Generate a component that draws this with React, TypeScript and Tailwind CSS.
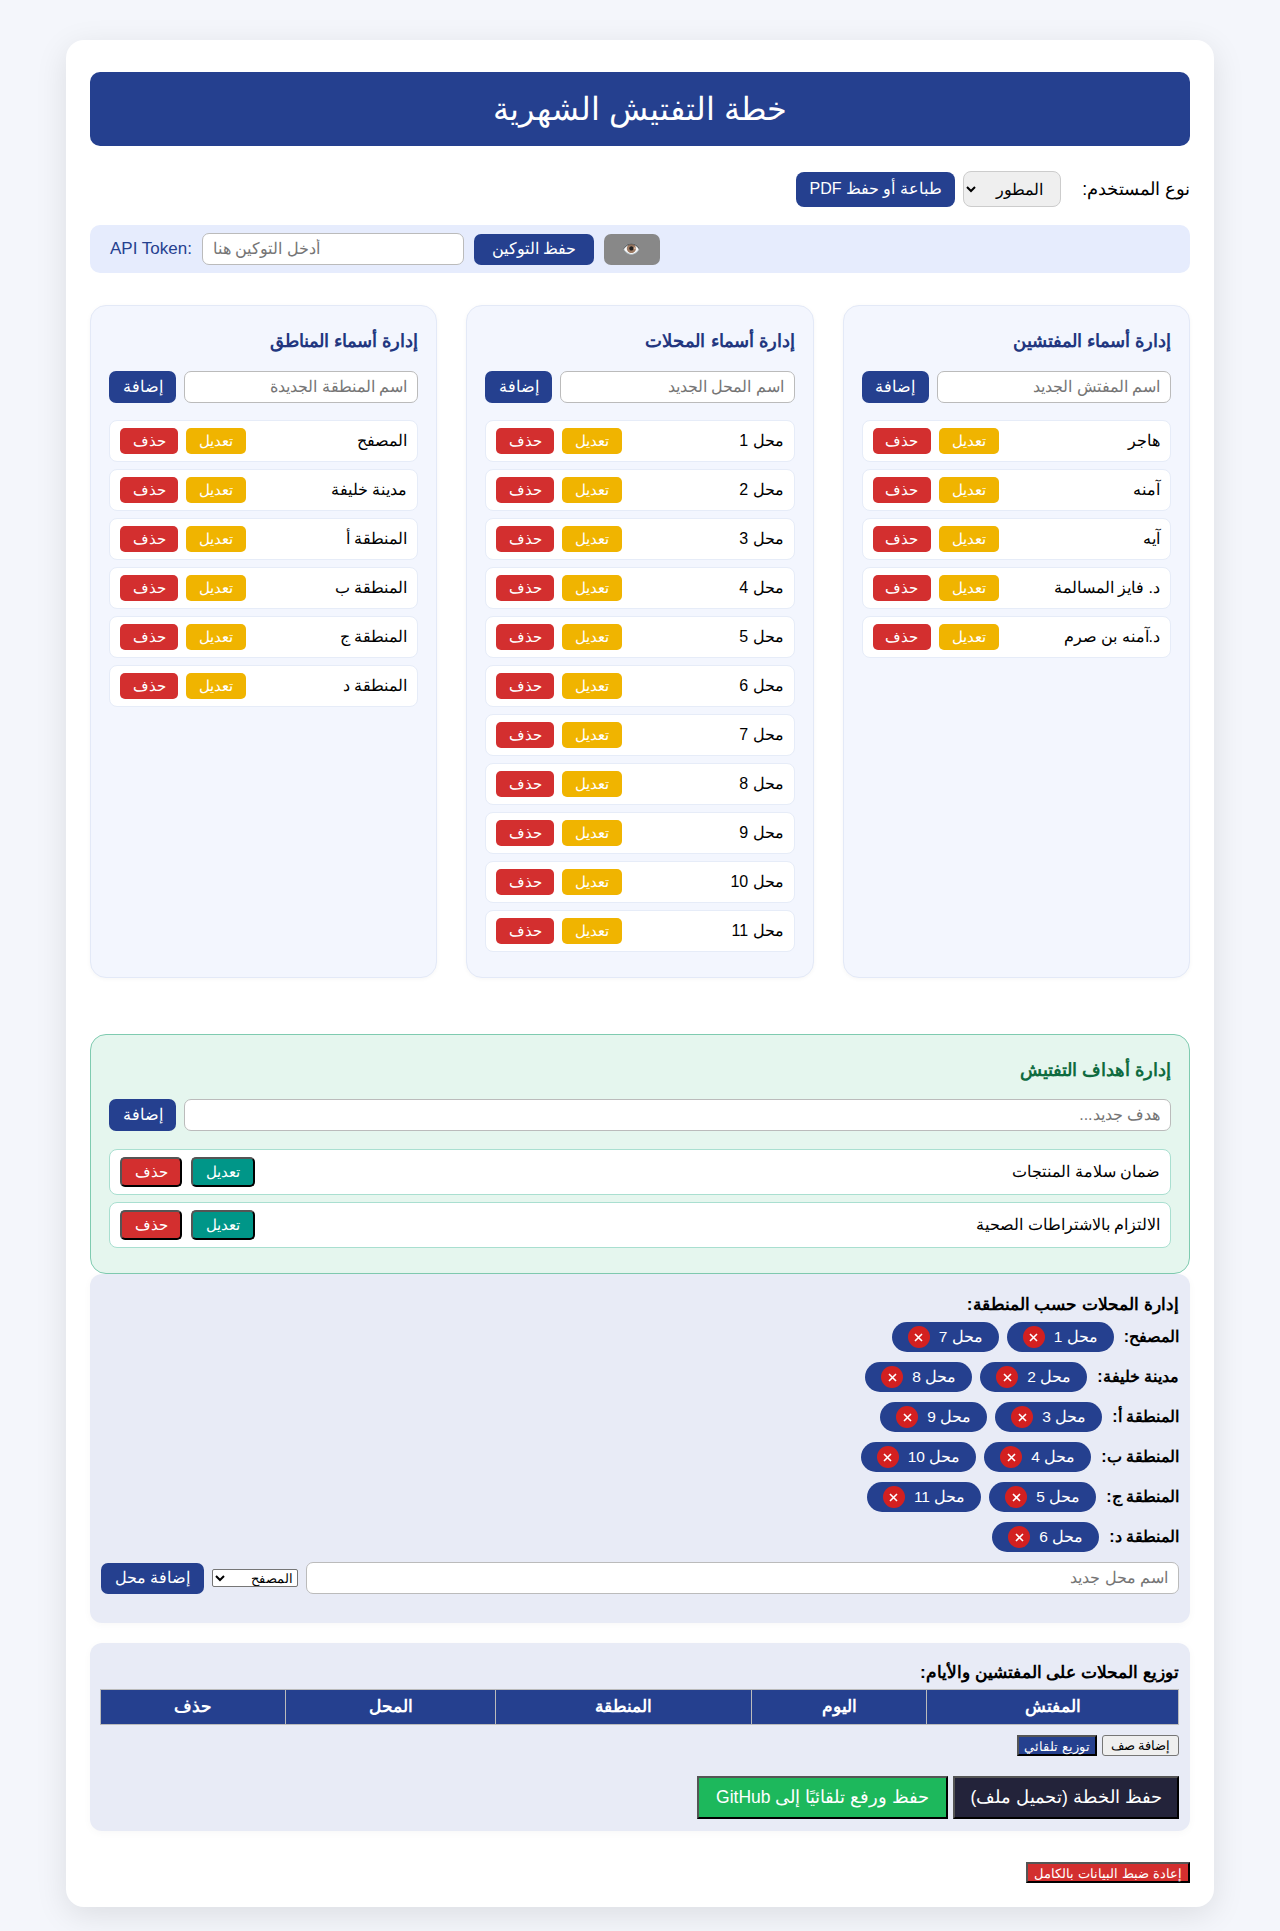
const fontFamily = '"Liberation Sans", Arial, sans-serif';

const inputCls = "min-w-0 rounded-[7px] border border-[#bbbbbb] bg-white px-[10px] text-[16px] text-black placeholder:text-[#757575] outline-none";
const blueBtn = "rounded-[7px] bg-[#25408f] text-[16px] text-white";

function ListCard({ title, placeholder, items }: { title: string; placeholder: string; items: string[] }) {
  return (
    <div className="rounded-[16px] border border-[#e3e9f7] bg-[#f3f6fe] px-[18px] pt-[18px] shadow-[0_1px_4px_rgba(0,0,0,0.04)]">
      <h3 className="mb-[14px] h-[33px] text-[18.4px] leading-[33px] font-bold text-[#22367f]">{title}</h3>
      <div className="mb-[17px] flex h-[32px] gap-[8px]">
        <input className={inputCls + " flex-1"} placeholder={placeholder} />
        <button className={blueBtn + " w-[67px]"}>إضافة</button>
      </div>
      <div className="flex flex-col gap-[7px] pb-[25px]">
        {items.map((t) => (
          <div key={t} className="flex h-[42px] items-center justify-between rounded-[8px] border border-[#e6ecf8] bg-white px-[10px] text-[16px] text-black">
            <span>{t}</span>
            <div className="flex gap-[8px]">
              <button className="h-[26px] w-[60px] rounded-[5px] bg-[#f0b400] text-[15px] text-white">تعديل</button>
              <button className="h-[26px] w-[58px] rounded-[5px] bg-[#d32f2f] text-[15px] text-white">حذف</button>
            </div>
          </div>
        ))}
      </div>
    </div>
  );
}

function Goal({ text }: { text: string }) {
  return (
    <div className="flex h-[46px] items-center justify-between rounded-[8px] border border-[#a9dfd0] bg-white px-[10px] text-[16px] text-black">
      <span>{text}</span>
      <div className="flex gap-[9px]">
        <button className="h-[30px] w-[64px] rounded-[5px] border-2 border-t-[#555] border-l-[#555] border-r-black border-b-black bg-[#009688] text-[15px] text-white">تعديل</button>
        <button className="h-[30px] w-[62px] rounded-[5px] border-2 border-t-[#555] border-l-[#555] border-r-black border-b-black bg-[#d32f2f] text-[15px] text-white">حذف</button>
      </div>
    </div>
  );
}

function Chip({ label }: { label: string }) {
  return (
    <span className="flex h-[30px] items-center gap-[9px] rounded-[16px] bg-[#25408f] px-[16px] text-[15.5px] text-white">
      <span>{label}</span>
      <span className="flex h-[22px] w-[22px] items-center justify-center rounded-full bg-[#d32020]">
        <svg width="9" height="9" viewBox="0 0 9 9" stroke="white" strokeWidth="1.6" aria-hidden="true">
          <path d="M1 1 8 8M8 1 1 8" />
        </svg>
      </span>
    </span>
  );
}

const regions: [string, string[]][] = [
  ["المصفح:", ["محل 1", "محل 7"]],
  ["مدينة خليفة:", ["محل 2", "محل 8"]],
  ["المنطقة أ:", ["محل 3", "محل 9"]],
  ["المنطقة ب:", ["محل 4", "محل 10"]],
  ["المنطقة ج:", ["محل 5", "محل 11"]],
  ["المنطقة د:", ["محل 6"]],
];

const columns: [string, number][] = [
  ["المفتش", 252],
  ["اليوم", 175],
  ["المنطقة", 256],
  ["المحل", 210],
  ["حذف", 185],
];

const bevel = "border-2 border-t-[#555] border-l-[#555] border-r-black border-b-black";

export default function App() {
  return (
    <div dir="rtl" style={{ fontFamily }} className="min-h-[1931px] bg-[#f4f6fb] pt-[40px]">
      <div className="mx-auto h-[1867px] w-[1148px] rounded-[18px] bg-white px-[24px] pt-[32px] shadow-[0_8px_32px_rgba(0,0,0,0.1)]">
        <header className="flex h-[74px] items-center justify-center rounded-[10px] bg-[#25408f]">
          <h1 className="text-[32px] font-normal text-white">خطة التفتيش الشهرية</h1>
        </header>

        <div className="mt-[25px] flex h-[36px] items-center">
          <label className="ml-[21px] text-[17.6px] text-black">نوع المستخدم:</label>
          <select className="h-[36px] w-[98px] rounded-[8px] border border-[#cccccc] bg-[#efefef] pr-[13px] pl-[7px] text-[16px] text-black">
            <option>المطور</option>
          </select>
          <button className="mr-[8px] h-[35px] w-[159px] rounded-[8px] bg-[#25408f] text-[16px] text-white">طباعة أو حفظ PDF</button>
        </div>

        <div dir="ltr" className="mt-[18px] flex h-[48px] items-center rounded-[10px] bg-[#e6ecfd] pl-[20px]">
          <label className="mr-[10px] text-[17px] text-[#25408f]">API Token:</label>
          <input className={inputCls + " h-[32px] w-[262px]"} placeholder="أدخل التوكين هنا" />
          <button className={blueBtn + " ml-[10px] h-[31px] w-[120px]"}>حفظ التوكين</button>
          <button className="ml-[10px] h-[31px] w-[56px] rounded-[7px] bg-[#888888] text-[15px] text-white">👁️</button>
        </div>

        <div className="mt-[32px] grid grid-cols-3 gap-[29px]">
          <ListCard title="إدارة أسماء المفتشين" placeholder="اسم المفتش الجديد" items={["هاجر", "آمنه", "آيه", "د. فايز المسالمة", "د.آمنه بن صرم"]} />
          <ListCard title="إدارة أسماء المحلات" placeholder="اسم المحل الجديد" items={["محل 1", "محل 2", "محل 3", "محل 4", "محل 5", "محل 6", "محل 7", "محل 8", "محل 9", "محل 10", "محل 11"]} />
          <ListCard title="إدارة أسماء المناطق" placeholder="اسم المنطقة الجديدة" items={["المصفح", "مدينة خليفة", "المنطقة أ", "المنطقة ب", "المنطقة ج", "المنطقة د"]} />
        </div>

        <section className="mt-[56px] h-[240px] rounded-[16px] border border-[#7fcbb0] bg-[#e5f6ee] px-[18px] pt-[18px]">
          <h3 className="mb-[13px] h-[33px] text-[18.4px] leading-[33px] font-bold text-[#0f6b3f]">إدارة أهداف التفتيش</h3>
          <div className="mb-[18px] flex h-[32px] gap-[8px]">
            <input className={inputCls + " flex-1"} placeholder="هدف جديد..." />
            <button className={blueBtn + " w-[67px]"}>إضافة</button>
          </div>
          <div className="flex flex-col gap-[7px]">
            <Goal text="ضمان سلامة المنتجات" />
            <Goal text="الالتزام بالاشتراطات الصحية" />
          </div>
        </section>

        <section className="h-[349px] rounded-[12px] bg-[#e8ebf6] px-[11px] pt-[19px] shadow-[0_2px_8px_rgba(0,0,0,0.03)]">
          <h4 className="mb-[7px] text-[17.3px] leading-[22px] font-bold text-black">إدارة المحلات حسب المنطقة:</h4>
          <div className="flex flex-col gap-[10px]">
            {regions.map(([name, shops]) => (
              <div key={name} className="flex h-[30px] items-center gap-[8px]">
                <b className="ml-[2px] text-[16px] text-black">{name}</b>
                {shops.map((s) => (
                  <Chip key={s} label={s} />
                ))}
              </div>
            ))}
          </div>
          <div className="mt-[10px] flex h-[32px] items-center gap-[8px]">
            <input className={inputCls + " h-[32px] flex-1"} placeholder="اسم محل جديد" />
            <select className="h-[18px] w-[86px] rounded-[2px] border border-[#767676] bg-white text-[13.33px] text-black">
              <option>المصفح</option>
            </select>
            <button className={blueBtn + " h-[31px] w-[103px]"}>إضافة محل</button>
          </div>
        </section>

        <section className="mt-[20px] h-[188px] rounded-[12px] bg-[#e8ebf6] px-[11px] pt-[18px] shadow-[0_2px_8px_rgba(0,0,0,0.03)]">
          <h4 className="mb-[6px] text-[17.3px] leading-[22px] font-bold text-black">توزيع المحلات على المفتشين والأيام:</h4>
          <table className="w-full table-fixed border-collapse">
            <thead>
              <tr>
                {columns.map(([name, w]) => (
                  <th key={name} style={{ width: w }} className="h-[35px] border border-[#bbbbbb] bg-[#25408f] text-[17.3px] font-bold text-white">{name}</th>
                ))}
              </tr>
            </thead>
          </table>
          <div className="mt-[10px] flex h-[21px] gap-[5px]">
            <button className="h-[21px] w-[77px] rounded-[3px] border border-[#767676] bg-[#efefef] text-[13.33px] text-black">إضافة صف</button>
            <button className={bevel + " h-[21px] w-[80px] bg-[#25408f] text-[13.33px] text-white"}>توزيع تلقائي</button>
          </div>
          <div className="mt-[20px] flex h-[43px] gap-[5px]">
            <button className={bevel + " w-[226px] bg-[#23233a] text-[17.5px] text-white"}>حفظ الخطة (تحميل ملف)</button>
            <button className={bevel + " w-[251px] bg-[#1db85c] text-[17.5px] text-white"}>حفظ ورفع تلقائيًا إلى GitHub</button>
          </div>
        </section>

        <div className="mt-[31px] flex">
          <button className={bevel + " h-[21px] w-[164px] bg-[#d32f2f] text-[13.33px] text-white"}>إعادة ضبط البيانات بالكامل</button>
        </div>
      </div>
    </div>
  );
}
